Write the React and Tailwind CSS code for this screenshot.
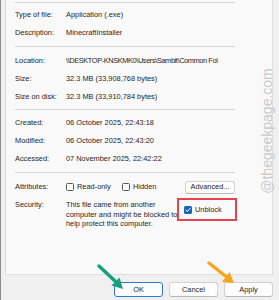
import React from "react";

function Row({ label, value, valueClass = "" }) {
  return (
    <div className="flex h-[18px] items-center">
      <div className="w-[51px] shrink-0 whitespace-nowrap">{label}</div>
      <div className={"whitespace-nowrap overflow-hidden " + valueClass}>{value}</div>
    </div>
  );
}

function Sep({ className = "" }) {
  return <div className={"h-px w-[220px] bg-[#d6d6d6] " + className} />;
}

function Box({ checked = false }) {
  if (checked) {
    return (
      <div className="flex h-[8px] w-[8px] shrink-0 items-center justify-center rounded-[1.5px] bg-[#1a63c0]">
        <svg width="6" height="6" viewBox="0 0 6 6">
          <path d="M1 3.2 L2.4 4.5 L5 1.4" fill="none" stroke="#fff" strokeWidth="1" strokeLinecap="round" strokeLinejoin="round" />
        </svg>
      </div>
    );
  }
  return <div className="h-[8px] w-[8px] shrink-0 rounded-[1.5px] border border-[#5a5a5a] bg-[#fbfbfb]" />;
}

function Btn({ children, primary = false }) {
  return (
    <div
      className={
        "flex h-[15px] w-[49px] items-center justify-center rounded-[3px] border bg-[#fdfdfd] " +
        (primary ? "border-[#2a78d0]" : "border-[#d2d2d2] border-b-[#b8b8b8]")
      }
    >
      {children}
    </div>
  );
}

export default function App() {
  return (
    <div className="relative flex h-[300px] w-[279px] flex-col overflow-hidden border-l border-[#8c8c8c] bg-[#f0f0f0] font-['Liberation_Sans',Arial,sans-serif] text-[7.4px] text-[#262626]">
      <div className="ml-[4px] h-[275px] w-[268px] border-x border-b border-[#dedede] bg-[#f9f9f9] pl-[9px] pt-[2px]">
        <div className="w-[220px]">
          <Sep />
          <div className="mt-[3px]">
            <Row label="Type of file:" value="Application (.exe)" />
            <Row label="Description:" value="MinecraftInstaller" />
          </div>
          <Sep className="mt-[4px]" />
          <div className="mt-[5px]">
            <Row
              label="Location:"
              valueClass="w-[172px] tracking-[-0.4px]"
              value={"\\\\DESKTOP-KNSKMK0\\Users\\Sambit\\Common Fol"}
            />
            <Row label="Size:" value="32.3 MB (33,908,768 bytes)" />
            <Row label="Size on disk:" value="32.3 MB (33,910,784 bytes)" />
          </div>
          <Sep className="mt-[3px]" />
          <div className="mt-[4px]">
            <Row label="Created:" value="06 October 2025, 22:43:18" />
            <Row label="Modified:" value="06 October 2025, 22:43:20" />
            <Row label="Accessed:" value="07 November 2025, 22:42:22" />
          </div>
          <Sep className="mt-[4px]" />
          <div className="mt-[5px] flex h-[18px] items-center">
            <div className="w-[51px] shrink-0">Attributes:</div>
            <div className="flex w-[56px] items-center gap-[3px]">
              <Box />
              <span className="whitespace-nowrap">Read-only</span>
            </div>
            <div className="flex items-center gap-[3px]">
              <Box />
              <span>Hidden</span>
            </div>
            <div className="ml-auto flex h-[13px] w-[50px] items-center justify-center rounded-[3px] border border-[#d2d2d2] border-b-[#b8b8b8] bg-[#fdfdfd]">
              Advanced...
            </div>
          </div>
          <div className="mt-[2px] flex items-start">
            <div className="w-[51px] shrink-0 pt-[2px] leading-[9.5px]">Security:</div>
            <div className="w-[111px] shrink-0 whitespace-nowrap pt-[2px] leading-[9.5px]">
              This file came from another
              <br />
              computer and might be blocked to
              <br />
              help protect this computer.
            </div>
            <div className="flex h-[23px] w-[60px] shrink-0 items-center gap-[3px] border-2 border-[#e5434e] pl-[5px] pt-[1px]">
              <Box checked />
              <span>Unblock</span>
            </div>
          </div>
        </div>
      </div>

      <div className="mt-[7px] flex justify-end gap-[6px] pr-[6px]">
        <Btn primary>OK</Btn>
        <Btn>Cancel</Btn>
        <Btn>Apply</Btn>
      </div>

      <div className="pointer-events-none absolute left-[266px] top-[131px] -translate-x-1/2 -translate-y-1/2 -rotate-90 whitespace-nowrap font-['Liberation_Sans',Arial,sans-serif] text-[14px] text-[#c9c9c9]">
        @thegeekpage.com
      </div>

      <svg className="pointer-events-none absolute left-0 top-0" width="279" height="300" viewBox="0 0 279 300">
        <line x1="98" y1="266" x2="114" y2="281" stroke="#17a07f" strokeWidth="3.5" strokeLinecap="round" />
        <polygon points="122,289 110.5,285.5 118.5,277.5" fill="#17a07f" />
        <line x1="208" y1="263" x2="225" y2="276.5" stroke="#f4a620" strokeWidth="3.5" strokeLinecap="round" />
        <polygon points="233,283 221,282 228.5,272" fill="#f4a620" />
      </svg>
    </div>
  );
}
